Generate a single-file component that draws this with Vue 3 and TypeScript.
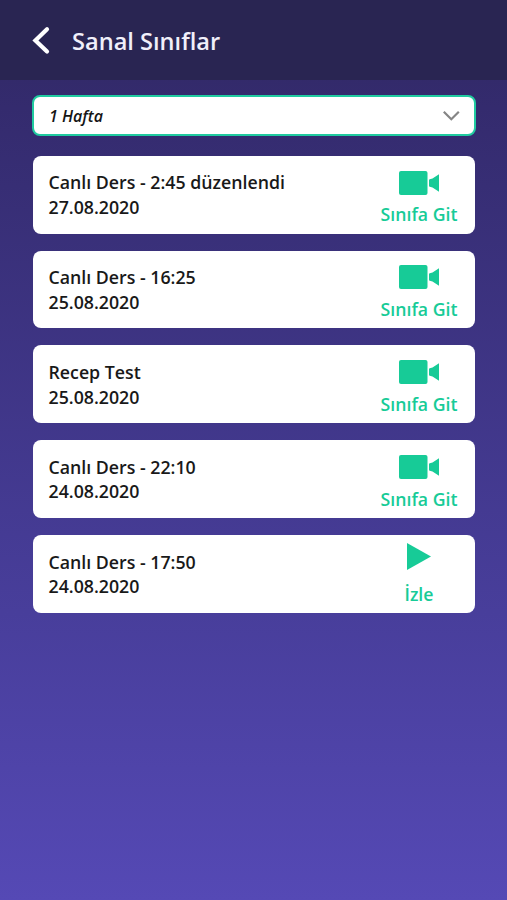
<script setup lang="ts">
interface Lesson {
  title: string
  date: string
  kind: 'live' | 'recorded'
}

const lessons: Lesson[] = [
  { title: 'Canlı Ders - 2:45 düzenlendi', date: '27.08.2020', kind: 'live' },
  { title: 'Canlı Ders - 16:25', date: '25.08.2020', kind: 'live' },
  { title: 'Recep Test', date: '25.08.2020', kind: 'live' },
  { title: 'Canlı Ders - 22:10', date: '24.08.2020', kind: 'live' },
  { title: 'Canlı Ders - 17:50', date: '24.08.2020', kind: 'recorded' },
]
</script>

<template>
  <div class="screen">
    <header class="topbar">
      <button class="back" aria-label="Geri">
        <svg width="18" height="30" viewBox="0 0 18 30">
          <path d="M15 3.2 3.4 14.4 15 25.6" fill="none" stroke="#fff" stroke-width="4.2" stroke-linecap="round" />
        </svg>
      </button>
      <h1 class="heading">Sanal Sınıflar</h1>
    </header>
    <main class="content">
      <button class="select">
        <span class="range">1 Hafta</span>
        <svg width="18" height="12" viewBox="0 0 18 12">
          <path d="M1.8 1.8 9.3 9.3 16.8 1.8" fill="none" stroke="#858585" stroke-width="2.2" />
        </svg>
      </button>
      <ul class="list">
        <li v-for="(lesson, i) in lessons" :key="i" class="card">
          <div class="info">
            <span>{{ lesson.title }}</span>
            <span>{{ lesson.date }}</span>
          </div>
          <button class="action">
            <span class="icon">
              <svg v-if="lesson.kind === 'live'" width="40" height="24" viewBox="0 0 40 24">
                <rect x="0" y="0" width="28.5" height="24" rx="2" fill="#17cb97" />
                <path d="M40 3.2v17.6l-6.5-4.4-2.7-.7a1 1 0 0 1-.8-1V9.3a1 1 0 0 1 .8-1l2.7-.7Z" fill="#17cb97" />
              </svg>
              <svg v-else class="play" width="24" height="27" viewBox="0 0 24 27">
                <path d="M0 0 24 13.5 0 27Z" fill="#17cb97" />
              </svg>
            </span>
            <span class="label">{{ lesson.kind === 'live' ? 'Sınıfa Git' : 'İzle' }}</span>
          </button>
        </li>
      </ul>
    </main>
  </div>
</template>

<style>
body {
  margin: 0;
}
</style>

<style scoped>
.screen {
  box-sizing: border-box;
  min-height: 900px;
  background: linear-gradient(180deg, #302862 0, #342b6e 12%, #483e9b 68%, #5549b5 100%);
  font-family: 'Open Sans', 'Noto Sans', sans-serif;
}
button {
  margin: 0;
  padding: 0;
  border: 0;
  background: none;
  font: inherit;
  color: inherit;
}
svg {
  display: block;
}
.topbar {
  display: flex;
  align-items: center;
  box-sizing: border-box;
  height: 80px;
  padding: 2px 32px 0;
  gap: 22px;
  background: #292552;
}
.back {
  width: 18px;
}
.heading {
  margin: 0;
  font-size: 23.6px;
  line-height: 32px;
  font-weight: 600;
  color: #f0effa;
}
.content {
  padding: 15px 31px 0 32px;
}
.select {
  display: flex;
  align-items: center;
  justify-content: space-between;
  box-sizing: border-box;
  width: 444px;
  height: 41px;
  padding: 0 14px 0 15px;
  border: 2px solid #20cba0;
  border-radius: 8px;
  background: #fff;
}
.range {
  font-size: 16px;
  font-style: italic;
  font-weight: 600;
  color: #151515;
}
.list {
  display: flex;
  flex-direction: column;
  gap: 17px;
  margin: 19.8px 1px 0;
  padding: 0;
  list-style: none;
}
.card {
  display: flex;
  justify-content: space-between;
  box-sizing: border-box;
  height: 77.8px;
  padding: 0 16px 0 15.5px;
  border-radius: 8px;
  background: #fff;
}
.info {
  display: flex;
  flex-direction: column;
  padding-top: 14.7px;
  font-size: 17.75px;
  line-height: 24.6px;
  font-weight: 600;
  color: #191919;
}
.action {
  display: flex;
  flex-direction: column;
  align-items: center;
  width: 80px;
  color: #17cb97;
}
.icon {
  display: flex;
  align-items: center;
  height: 46.6px;
  padding-top: 7px;
  box-sizing: border-box;
}
.icon:has(.play) {
  padding: 0 0 4px;
}
.label {
  font-size: 17.7px;
  line-height: 24px;
  font-weight: 600;
  white-space: nowrap;
}
</style>
